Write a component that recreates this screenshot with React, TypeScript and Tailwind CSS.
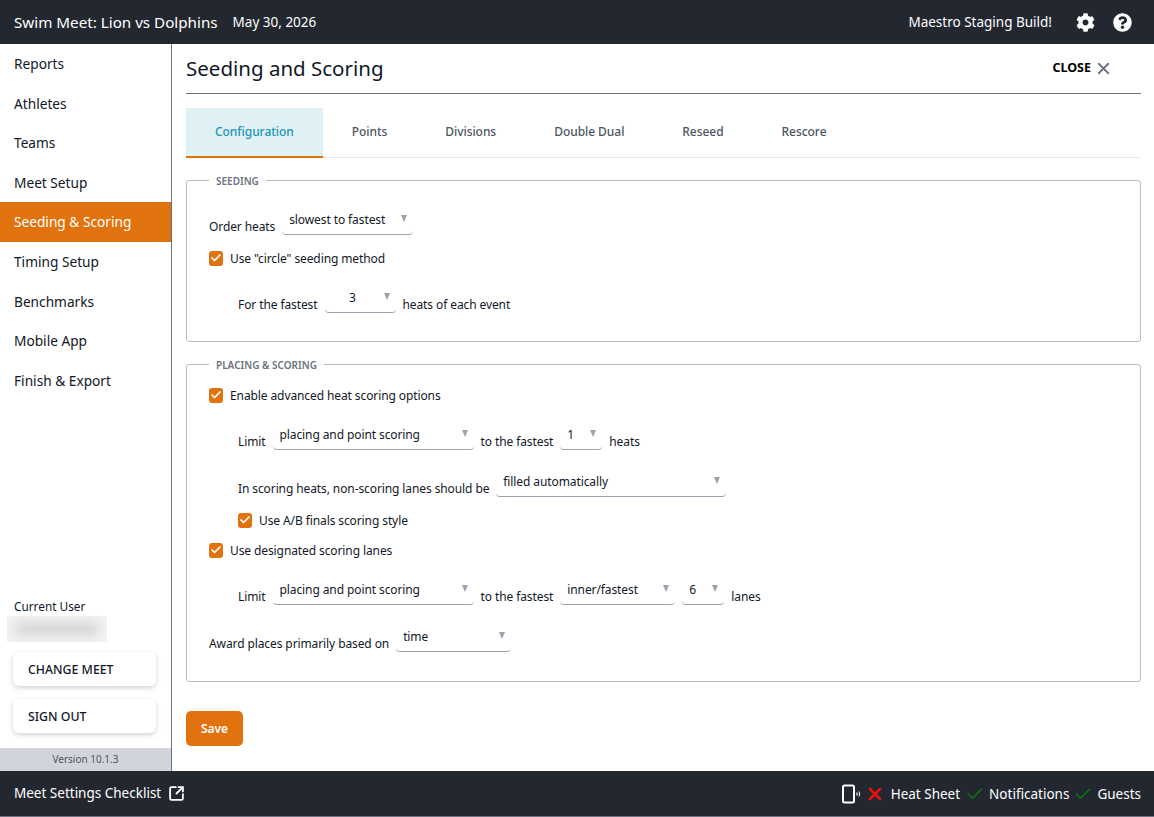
import { type ReactNode } from "react";
import { FaCog, FaQuestionCircle } from "react-icons/fa";
import { Check, SquareArrowOutUpRight, X } from "lucide-react";

const navItems = [
  "Reports",
  "Athletes",
  "Teams",
  "Meet Setup",
  "Seeding & Scoring",
  "Timing Setup",
  "Benchmarks",
  "Mobile App",
  "Finish & Export",
];

const tabs = ["Configuration", "Points", "Divisions", "Double Dual", "Reseed", "Rescore"];

function Select({ value, width, center }: { value: string; width: string; center?: boolean }) {
  return (
    <div className={`relative h-[30px] shrink-0 rounded-b-[4px] border-b border-[#9ca3af] text-[12px] leading-[30px] tracking-[-0.1px] text-[#111827] ${width}`}>
      <span className={center ? "block w-[56px] text-center" : "block pl-[7px]"}>{value}</span>
      <span className="absolute top-[10px] right-[6px] h-0 w-0 border-x-[3.5px] border-t-[7px] border-x-transparent border-t-[#9ca3af]" />
    </div>
  );
}

function Label({ children }: { children: ReactNode }) {
  return <span className="-mb-[2px] shrink-0 text-[12px] leading-[20px] tracking-[-0.1px] text-[#111827]">{children}</span>;
}

function Row({ className, children }: { className: string; children: ReactNode }) {
  return <div className={`flex items-end ${className}`}>{children}</div>;
}

function CheckRow({ label, className }: { label: string; className: string }) {
  return (
    <div className={`flex h-[20px] items-center ${className}`}>
      <span className="mr-[7px] flex h-[15px] w-[14px] items-center justify-center rounded-[3px] bg-[#e0730d]">
        <Check size={12} strokeWidth={3.5} className="text-white" />
      </span>
      <span className="pt-[2px] text-[12px] leading-[20px] tracking-[-0.1px] text-[#111827]">{label}</span>
    </div>
  );
}

function Group({ title, className, children }: { title: string; className: string; children: ReactNode }) {
  return (
    <fieldset className={`rounded-[3px] border border-[#bdbdbd] px-[22px] ${className}`}>
      <legend className="px-[7px] pt-[2px] text-[10px] leading-[14px] font-semibold text-[#6b7280]">
        {title}
      </legend>
      {children}
    </fieldset>
  );
}

function SideButton({ label, className }: { label: string; className: string }) {
  return (
    <button className={`mx-[13px] block h-[34px] w-[143px] rounded-[6px] bg-white pt-[2px] pl-[15px] text-left text-[12.3px] font-medium text-[#111827] shadow-[0_2px_5px_rgba(0,0,0,0.18)] ${className}`}>
      {label}
    </button>
  );
}

export default function App() {
  return (
    <div className="flex h-screen flex-col overflow-hidden bg-white font-['Noto_Sans',sans-serif]">
      <header className="flex h-[44px] shrink-0 items-center bg-[#232730] pr-[22px] pl-[14px] text-white">
        <span className="text-[15.2px]">Swim Meet: Lion vs Dolphins</span>
        <span className="ml-[15px] text-[13.5px]">May 30, 2026</span>
        <span className="ml-auto text-[13.5px]">Maestro Staging Build!</span>
        <FaCog size={19} className="ml-[24px]" />
        <FaQuestionCircle size={19} className="ml-[18px]" />
      </header>

      <div className="flex min-h-0 flex-1">
        <aside className="flex w-[172px] shrink-0 flex-col border-r border-[#6b7280]">
          <nav>
            {navItems.map((item) => (
              <div
                key={item}
                className={`flex h-[39.6px] items-center pt-[1px] pl-[14px] text-[13.7px] ${
                  item === "Seeding & Scoring" ? "bg-[#e0730d] text-white" : "text-[#111827]"
                }`}
              >
                {item}
              </div>
            ))}
          </nav>
          <div className="mt-auto">
            <div className="h-[16px] pl-[14px] text-[11.8px] leading-[14px] text-[#111827]">Current User</div>
            <div className="mt-[1px] ml-[7px] flex h-[26px] w-[100px] items-center justify-center bg-[#f1f1f1]">
              <div className="h-[14px] w-[84px] rounded-full bg-[#d9d9d9] blur-[4px]" />
            </div>
            <SideButton label="CHANGE MEET" className="mt-[10px]" />
            <SideButton label="SIGN OUT" className="mt-[13px]" />
            <div className="mt-[15px] flex h-[23px] items-center justify-center bg-[#d1d5db] text-[10px] text-[#4b5563]">
              Version 10.1.3
            </div>
          </div>
        </aside>

        <main className="min-w-0 flex-1 pr-[13px] pl-[14px]">
          <div className="flex h-[50px] items-center border-b border-[#6b7280]">
            <h1 className="text-[20.5px] text-[#111827]">Seeding and Scoring</h1>
            <span className="mr-[3px] mb-[1px] ml-auto text-[12.5px] font-bold text-black">CLOSE</span>
            <X size={19} strokeWidth={2.3} className="mr-[28px] text-[#6b7280]" />
          </div>

          <div className="mt-[14px] flex h-[50px] border-b border-[#e5e7eb]">
            {tabs.map((tab, i) => (
              <div
                key={tab}
                className={`flex h-[50px] items-center border-b-2 px-[29px] text-[12px] font-medium tracking-[-0.05px] ${
                  i === 0 ? "border-[#e0730d] bg-[#e0f1f6] text-[#1a93b5]" : "border-transparent text-[#4b5563]"
                }`}
              >
                {tab}
              </div>
            ))}
          </div>

          <Group title="SEEDING" className="mt-[14px] h-[170px]">
            <Row className="mt-[17px]">
              <Label>Order heats</Label>
              <div className="ml-[7px]">
                <Select value="slowest to fastest" width="w-[131px]" />
              </div>
            </Row>
            <CheckRow label={'Use "circle" seeding method'} className="mt-[13px]" />
            <Row className="mt-[15px] pl-[29px]">
              <Label>For the fastest</Label>
              <div className="mx-[7px]">
                <Select value="3" width="w-[71px]" center />
              </div>
              <Label>heats of each event</Label>
            </Row>
          </Group>

          <Group title="PLACING & SCORING" className="mt-[14px] h-[326px]">
            <CheckRow label="Enable advanced heat scoring options" className="mt-[13px]" />
            <Row className="mt-[15px] pl-[29px]">
              <Label>Limit</Label>
              <div className="mx-[7px]">
                <Select value="placing and point scoring" width="w-[201px]" />
              </div>
              <Label>to the fastest</Label>
              <div className="mx-[7px]">
                <Select value="1" width="w-[42px]" />
              </div>
              <Label>heats</Label>
            </Row>
            <Row className="mt-[17px] pl-[29px]">
              <Label>In scoring heats, non-scoring lanes should be</Label>
              <div className="ml-[7px]">
                <Select value="filled automatically" width="w-[230px]" />
              </div>
            </Row>
            <CheckRow label="Use A/B finals scoring style" className="mt-[13px] pl-[29px]" />
            <CheckRow label="Use designated scoring lanes" className="mt-[10px]" />
            <Row className="mt-[15px] pl-[29px]">
              <Label>Limit</Label>
              <div className="mx-[7px]">
                <Select value="placing and point scoring" width="w-[201px]" />
              </div>
              <Label>to the fastest</Label>
              <div className="mx-[7px]">
                <Select value="inner/fastest" width="w-[115px]" />
              </div>
              <div className="mr-[7px]">
                <Select value="6" width="w-[42px]" />
              </div>
              <Label>lanes</Label>
            </Row>
            <Row className="mt-[17px]">
              <Label>Award places primarily based on</Label>
              <div className="ml-[7px]">
                <Select value="time" width="w-[115px]" />
              </div>
            </Row>
          </Group>

          <button className="mt-[29px] h-[35px] w-[57px] rounded-[5px] bg-[#e0730d] text-[12px] font-semibold text-white">
            Save
          </button>
        </main>
      </div>

      <footer className="flex h-[46px] shrink-0 items-center border-b border-[#6b7280] bg-[#232730] pr-[13px] pl-[14px] text-white">
        <span className="text-[13.5px]">Meet Settings Checklist</span>
        <SquareArrowOutUpRight size={17} strokeWidth={2.6} className="ml-[7px]" />
        <svg width="22" height="22" viewBox="0 0 22 22" fill="none" className="ml-auto text-white">
          <rect x="4" y="2.5" width="11" height="17" rx="1.5" stroke="currentColor" strokeWidth="2" />
          <path d="M18 9.5v3" stroke="currentColor" strokeWidth="1.2" />
          <path d="M20 8.5c.7 1.6.7 3.4 0 5" stroke="currentColor" strokeWidth="1" />
        </svg>
        <X size={20} strokeWidth={3} className="ml-[4px] text-[#ef0f0f]" />
        <span className="ml-[6px] pt-[1px] text-[13.5px]">Heat Sheet</span>
        <Check size={20} strokeWidth={1.8} className="ml-[5px] text-[#0a7a12]" />
        <span className="ml-[4px] pt-[1px] text-[13.5px]">Notifications</span>
        <Check size={20} strokeWidth={1.8} className="ml-[4px] text-[#0a7a12]" />
        <span className="ml-[4px] pt-[1px] text-[13.5px]">Guests</span>
      </footer>
    </div>
  );
}
